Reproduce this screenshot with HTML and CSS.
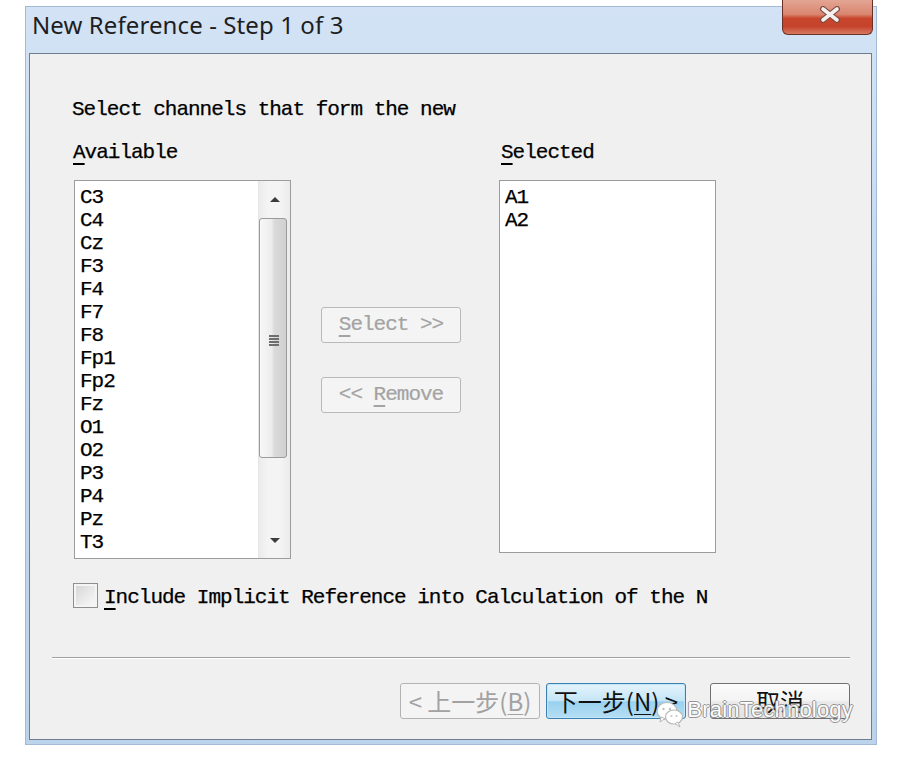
FILE: index.html
```html
<!DOCTYPE html>
<html lang="en">
<head>
    <meta charset="UTF-8">
    <meta name="viewport" content="width=device-width, initial-scale=1.0">
    <title>New Reference - Step 1 of 3</title>
    <link rel="stylesheet" href="styles.css">
</head>
<body>
    <div class="window">
        <div class="titlebar">
            <div class="title">New Reference - Step 1 of 3</div>
            <button class="close-btn" aria-label="Close">
                <svg width="22" height="17" viewBox="0 0 22 17">
                    <path d="M4 3 L18 14 M18 3 L4 14" stroke="#7a4a42" stroke-width="6" stroke-linecap="round"/>
                    <path d="M4 3 L18 14 M18 3 L4 14" stroke="#f4f0ee" stroke-width="3.6" stroke-linecap="round"/>
                </svg>
            </button>
        </div>

        <div class="client">
            <div class="prompt">Select channels that form the new</div>

            <div class="columns">
                <div class="column">
                    <div class="label"><u>A</u>vailable</div>
                    <div class="listbox listbox-left">
                        <ul class="items">
                            <li>C3</li>
                            <li>C4</li>
                            <li>Cz</li>
                            <li>F3</li>
                            <li>F4</li>
                            <li>F7</li>
                            <li>F8</li>
                            <li>Fp1</li>
                            <li>Fp2</li>
                            <li>Fz</li>
                            <li>O1</li>
                            <li>O2</li>
                            <li>P3</li>
                            <li>P4</li>
                            <li>Pz</li>
                            <li>T3</li>
                        </ul>
                        <div class="scrollbar">
                            <div class="arrow"><span class="tri-up"></span></div>
                            <div class="thumb">
                                <span class="grip"></span>
                            </div>
                            <div class="track"></div>
                            <div class="arrow"><span class="tri-down"></span></div>
                        </div>
                    </div>
                </div>

                <div class="column middle">
                    <button class="btn move-btn" disabled><u>S</u>elect &gt;&gt;</button>
                    <button class="btn move-btn" disabled>&lt;&lt; <u>R</u>emove</button>
                </div>

                <div class="column">
                    <div class="label label-right"><u>S</u>elected</div>
                    <div class="listbox listbox-right">
                        <ul class="items">
                            <li>A1</li>
                            <li>A2</li>
                        </ul>
                    </div>
                </div>
            </div>

            <div class="check-row">
                <span class="checkbox"></span>
                <span class="check-label"><u>I</u>nclude Implicit Reference into Calculation of the N</span>
            </div>

            <div class="separator"></div>

            <div class="footer">
                <button class="btn wiz-btn" disabled>&lt; 上一步(<u>B</u>)</button>
                <button class="btn wiz-btn default">下一步(<u>N</u>) &gt;</button>
                <button class="btn wiz-btn cancel">取消</button>

                <div class="watermark">
                    <svg class="wm-icon" width="30" height="28" viewBox="0 0 30 28">
                        <ellipse cx="12" cy="11" rx="10" ry="8.5" fill="#ffffff" stroke="#b8b8b8" stroke-width="1.2"/>
                        <path d="M6 17 L5 22 L10 18.5 Z" fill="#ffffff" stroke="#b8b8b8" stroke-width="1"/>
                        <ellipse cx="19" cy="17" rx="8.5" ry="7" fill="#ffffff" stroke="#b8b8b8" stroke-width="1.2"/>
                        <path d="M23 22 L25 27 L20 23.5 Z" fill="#ffffff" stroke="#b8b8b8" stroke-width="1"/>
                        <circle cx="8.5" cy="9" r="1.2" fill="#c0c0c0"/>
                        <circle cx="15" cy="9" r="1.2" fill="#c0c0c0"/>
                        <circle cx="16.5" cy="16" r="1" fill="#c0c0c0"/>
                        <circle cx="21.5" cy="16" r="1" fill="#c0c0c0"/>
                    </svg>
                    <span class="wm-text">BrainTechnology</span>
                </div>
            </div>
        </div>
    </div>
</body>
</html>
```

FILE: styles.css
```css
body {
    margin: 0;
    background: #ffffff;
}
.window {
    box-sizing: border-box;
    width: 852px;
    height: 739px;
    margin: 6px 0 0 25px;
    padding: 0 4px 4px 3px;
    border: 1px solid #a3bad6;
    background: linear-gradient(180deg, #d3e3f5 0%, #c4d9f0 40%, #bcd3ec 100%);
    display: flex;
    flex-direction: column;
}
.titlebar {
    height: 46px;
    display: flex;
    justify-content: space-between;
    align-items: flex-start;
}
.title {
    font-family: "Noto Sans", "Open Sans", sans-serif;
    font-size: 24px;
    line-height: 30px;
    letter-spacing: 0.1px;
    color: #1e1e1e;
    padding: 3px 0 0 3px;
}
.close-btn {
    box-sizing: border-box;
    width: 91px;
    height: 35px;
    margin: -7px -1px 0 0;
    padding: 6px 0 0 4px;
    border: 1px solid #6a3026;
    border-top: none;
    border-radius: 0 0 6px 6px;
    background: linear-gradient(180deg, #e3a594 0%, #d98670 42%, #c9462d 54%, #c5432b 78%, #d77a61 100%);
    display: flex;
    align-items: flex-start;
    justify-content: center;
}
.client {
    box-sizing: border-box;
    height: 687px;
    border: 1px solid #6e7e90;
    background: #f0f0f0;
    padding: 44px 0 0 43px;
    display: flex;
    flex-direction: column;
    font-family: "Liberation Mono", "Courier New", monospace;
    font-size: 21px;
    letter-spacing: -1px;
    line-height: 24px;
    color: #000;
    -webkit-text-stroke: 0.25px #000;
}
u {
    text-decoration-thickness: 2px;
    text-underline-offset: 5px;
}
.prompt {
    height: 24px;
    margin-left: -1px;
}
.columns {
    margin-top: 19px;
    display: flex;
    gap: 30px;
    align-items: flex-start;
}
.column {
    display: flex;
    flex-direction: column;
}
.label {
    height: 24px;
    margin-bottom: 15px;
}
.label-right {
    margin-left: 2px;
}
.middle {
    padding-top: 166px;
    gap: 34px;
    margin-right: 8px;
}
.listbox {
    box-sizing: border-box;
    width: 217px;
    border: 1px solid #9c9c9c;
    background: #ffffff;
    display: flex;
    overflow: hidden;
}
.listbox-left {
    height: 379px;
    margin-left: 1px;
}
.listbox-right {
    height: 373px;
}
.items {
    flex: 1;
    list-style: none;
    margin: 0;
    padding: 5px 0 0 5px;
    line-height: 23px;
    overflow: hidden;
}
.scrollbar {
    width: 31px;
    display: flex;
    flex-direction: column;
    background: linear-gradient(90deg, #ebebeb 0%, #f4f4f4 30%, #f4f4f4 70%, #ebebeb 100%);
    border-left: 1px solid #e6e6e6;
}
.arrow {
    height: 36px;
    display: flex;
    align-items: center;
    justify-content: center;
}
.tri-up, .tri-down {
    width: 0;
    height: 0;
    border-left: 5px solid transparent;
    border-right: 5px solid transparent;
}
.tri-up {
    border-bottom: 5px solid #3c3c3c;
}
.tri-down {
    border-top: 5px solid #3c3c3c;
}
.thumb {
    box-sizing: border-box;
    height: 240px;
    margin: 1px 3px 0 0;
    border: 1px solid #9a9a9a;
    border-radius: 3px;
    background: linear-gradient(90deg, #f8f8f8 0%, #ececec 45%, #dadada 55%, #d0d0d0 100%);
    display: flex;
    align-items: center;
    justify-content: center;
}
.grip {
    width: 10px;
    height: 11px;
    background: repeating-linear-gradient(180deg, #6e6e6e 0 2px, transparent 2px 3px);
    margin: 4px 0 0 2px;
}
.track {
    flex: 1;
}
.btn {
    font: inherit;
    letter-spacing: inherit;
    padding: 0;
    cursor: default;
}
.move-btn {
    width: 140px;
    height: 36px;
    border: 1px solid #b9b9b9;
    border-radius: 3px;
    background: #f4f4f4;
    color: #a3a3a3;
    -webkit-text-stroke: 0.2px #a3a3a3;
    line-height: 24px;
}
.check-row {
    margin-top: 24px;
    height: 25px;
    display: flex;
    gap: 6px;
}
.checkbox {
    box-sizing: border-box;
    width: 25px;
    height: 25px;
    border: 1px solid #8e8f8f;
    box-shadow: inset 0 0 0 2px #f4f4f4;
    background: linear-gradient(135deg, #d2d2d2 0%, #e8e8e8 50%, #fbfbfb 100%);
}
.check-label {
    padding-top: 3px;
}
.separator {
    margin: 49px 21px 0 -21px;
    height: 1px;
    border-top: 1px solid #a0a0a0;
    background: #ffffff;
}
.footer {
    position: relative;
    margin-top: 24px;
    margin-right: 21px;
    display: flex;
    justify-content: flex-end;
    gap: 6px;
}
.wiz-btn {
    box-sizing: border-box;
    width: 140px;
    height: 36px;
    font-family: "Noto Sans CJK SC", "Noto Sans", sans-serif;
    font-size: 24px;
    letter-spacing: 0;
    line-height: 32px;
    -webkit-text-stroke: 0;
    border-radius: 3px;
    color: #111;
    white-space: nowrap;
}
.wiz-btn u {
    text-underline-offset: 3px;
    text-decoration-thickness: 1px;
}
.wiz-btn:disabled {
    border: 1px solid #b3b3b3;
    background: #f4f4f4;
    color: #a2a2a2;
}
.default {
    border: 1px solid #3c7fb1;
    background: linear-gradient(180deg, #e5f4fc 0%, #c4e5f6 50%, #98d1ef 52%, #b6def3 100%);
    box-shadow: inset 0 0 0 1px #bfe6fa;
}
.cancel {
    margin-left: 18px;
    border: 1px solid #707070;
    background: linear-gradient(180deg, #fbfbfb 0%, #f3f3f3 50%, #e9e9e9 52%, #e4e4e4 100%);
}
.watermark {
    position: absolute;
    right: -3px;
    top: 9px;
    display: flex;
    align-items: center;
    gap: 2px;
    pointer-events: none;
    -webkit-text-stroke: 0;
}
.wm-icon {
    margin-top: 8px;
}
.wm-text {
    font-family: "Liberation Sans", Arial, sans-serif;
    font-size: 22px;
    letter-spacing: 0.2px;
    color: #ffffff;
    text-shadow: 1px 0 0 #8a8a8a, -1px 0 0 #8a8a8a, 0 1px 0 #8a8a8a, 0 -1px 0 #8a8a8a;
    opacity: 0.9;
}
```
